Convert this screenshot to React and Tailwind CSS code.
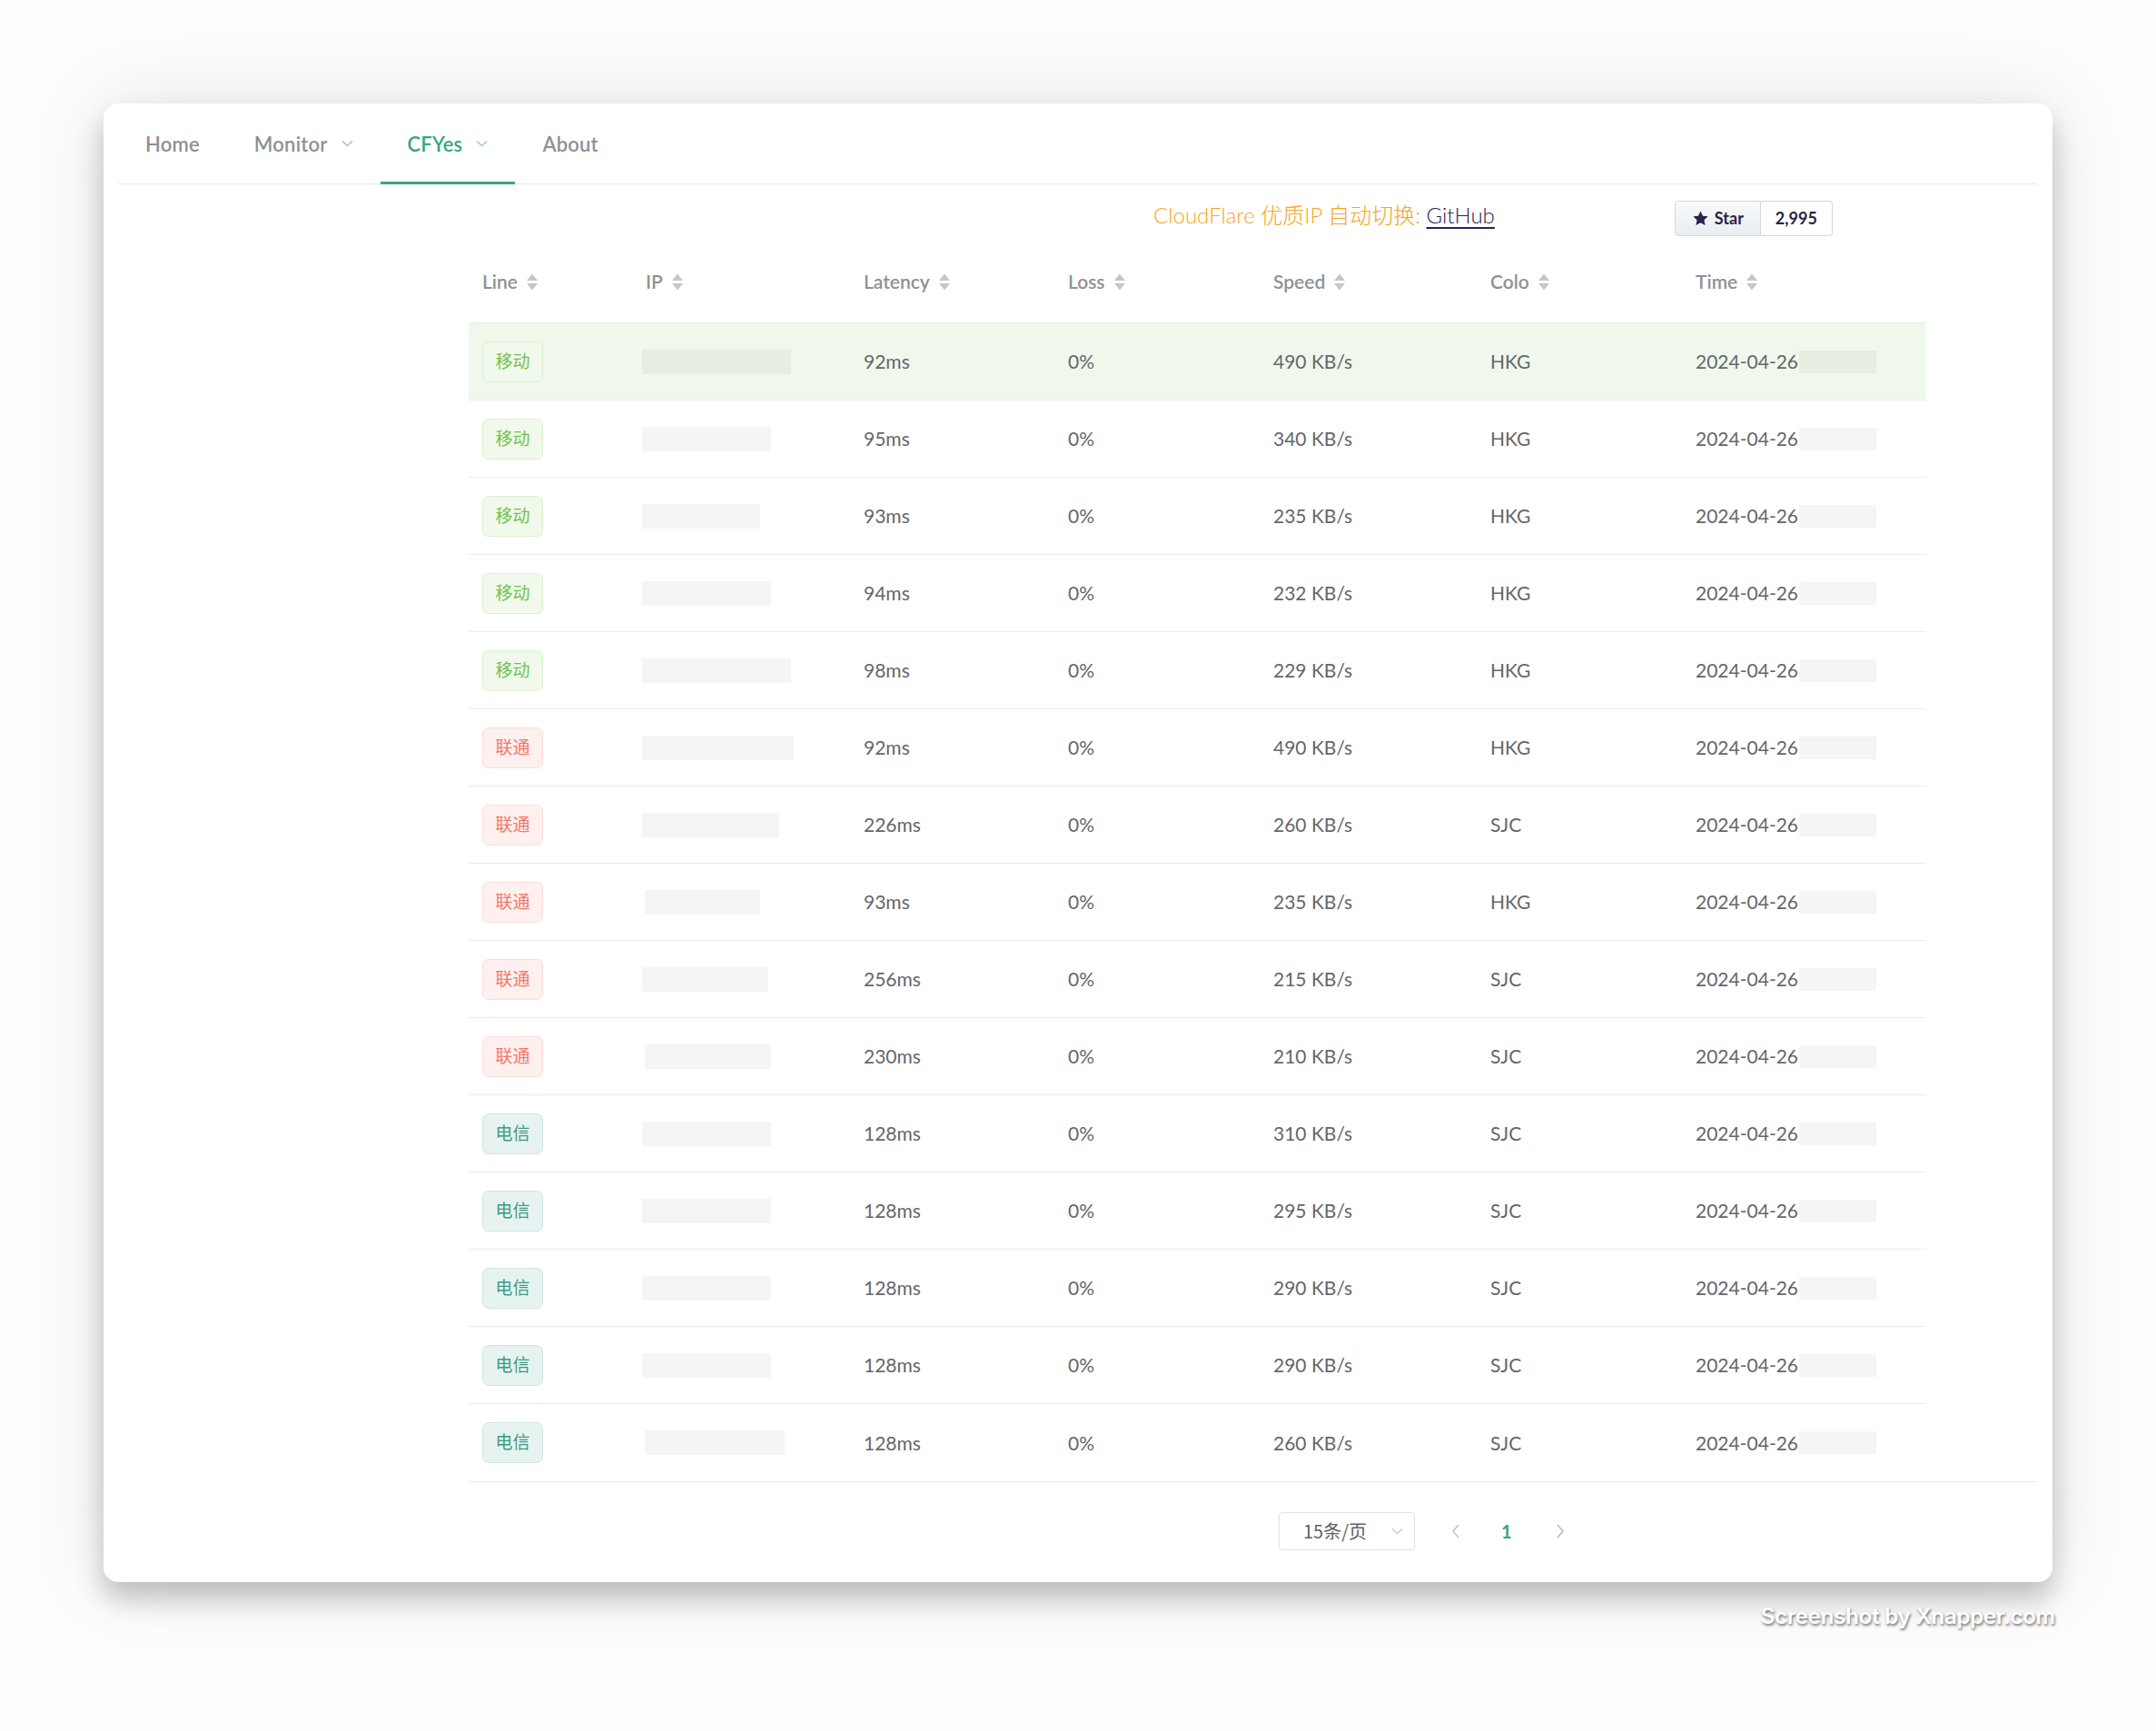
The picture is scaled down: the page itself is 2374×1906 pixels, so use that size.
const rows = [
  { line: "移动", ip: 164, latency: "92ms", speed: "490 KB/s", colo: "HKG" },
  { line: "移动", ip: 142, latency: "95ms", speed: "340 KB/s", colo: "HKG" },
  { line: "移动", ip: 130, latency: "93ms", speed: "235 KB/s", colo: "HKG" },
  { line: "移动", ip: 142, latency: "94ms", speed: "232 KB/s", colo: "HKG" },
  { line: "移动", ip: 164, latency: "98ms", speed: "229 KB/s", colo: "HKG" },
  { line: "联通", ip: 167, latency: "92ms", speed: "490 KB/s", colo: "HKG" },
  { line: "联通", ip: 151, latency: "226ms", speed: "260 KB/s", colo: "SJC" },
  { line: "联通", ip: 127, latency: "93ms", speed: "235 KB/s", colo: "HKG", shift: true },
  { line: "联通", ip: 139, latency: "256ms", speed: "215 KB/s", colo: "SJC" },
  { line: "联通", ip: 139, latency: "230ms", speed: "210 KB/s", colo: "SJC", shift: true },
  { line: "电信", ip: 142, latency: "128ms", speed: "310 KB/s", colo: "SJC" },
  { line: "电信", ip: 142, latency: "128ms", speed: "295 KB/s", colo: "SJC" },
  { line: "电信", ip: 142, latency: "128ms", speed: "290 KB/s", colo: "SJC" },
  { line: "电信", ip: 142, latency: "128ms", speed: "290 KB/s", colo: "SJC" },
  { line: "电信", ip: 154, latency: "128ms", speed: "260 KB/s", colo: "SJC", shift: true },
];

const tagStyles = {
  移动: "text-[#72c24f] bg-[#f0f9eb] border-[#dcf0d0]",
  联通: "text-[#f2776a] bg-[#fef0ee] border-[#fcdcd5]",
  电信: "text-[#3c9a84] bg-[#e7f3f1] border-[#cfe5e1]",
};

const columns = [
  { label: "Line", w: "w-[180px]" },
  { label: "IP", w: "w-[240px]" },
  { label: "Latency", w: "w-[225px]" },
  { label: "Loss", w: "w-[226px]" },
  { label: "Speed", w: "w-[239px]" },
  { label: "Colo", w: "w-[226px]" },
  { label: "Time", w: "w-[269px]" },
];

function Chevron({ className = "" }) {
  return (
    <svg width="13" height="8" viewBox="0 0 13 8" className={className} fill="none">
      <polyline points="1,1.5 6.5,6.5 12,1.5" stroke="currentColor" strokeWidth="1.2" />
    </svg>
  );
}

function SortIcon() {
  return (
    <svg width="14" height="21" viewBox="0 0 14 21" className="ml-[9px] text-[#c3c7cc]">
      <path d="M7 1.5 L13 9 L1 9 Z" fill="currentColor" />
      <path d="M7 19.5 L13 12 L1 12 Z" fill="currentColor" />
    </svg>
  );
}

function NavItem({ label, active, caret }) {
  return (
    <div
      className={`relative h-full px-[30px] flex items-center gap-[15px] tracking-[0.2px] ${
        active ? "text-[#37a681]" : "text-[#8d9196]"
      }`}
    >
      <span>{label}</span>
      {caret && <Chevron className={active ? "text-[#8fcab5]" : "text-[#a9adb1]"} />}
      {active && <span className="absolute left-0 right-0 bottom-[-1px] h-[3px] bg-[#3aa581]" />}
    </div>
  );
}

export default function App() {
  return (
    <div
      className="w-[2374px] min-h-[1906px] bg-[#fdfdfd] pt-[114px] pl-[114px]"
      style={{ fontFamily: "Lato, 'Noto Sans CJK SC', sans-serif" }}
    >
      <div className="w-[2146px] h-[1628px] bg-white rounded-[16px] shadow-[0_18px_30px_rgba(0,0,0,0.22),0_0_90px_rgba(0,0,0,0.10)] flex flex-col">
        {/* top nav */}
        <nav className="mx-[16px] h-[89px] border-b border-[#e6e7ea] flex items-stretch text-[22px] font-semibold">
          <NavItem label="Home" />
          <NavItem label="Monitor" caret />
          <NavItem label="CFYes" caret active />
          <NavItem label="About" />
        </nav>

        {/* title row */}
        <div className="mt-[18px] h-[39px] flex items-center pl-[1156px]">
          <div className="text-[24px] font-light text-[#f5a524] leading-none mb-[8px]">
            CloudFlare 优质IP 自动切换:{" "}
            <a className="text-[#2e2150] underline underline-offset-[4px] decoration-[2px]">GitHub</a>
          </div>
          <div className="ml-[198px] flex h-[39px] text-[18px] font-bold text-[#2d2249]">
            <div className="w-[95px] flex items-center justify-center gap-[6px] rounded-l-[4px] border border-[#d3d6da] bg-gradient-to-b from-[#f7f9fa] to-[#eaeef1]">
              <svg width="19" height="19" viewBox="0 0 24 24" fill="currentColor">
                <path d="M12 1.8l3.1 6.6 7.2.9-5.3 5 1.4 7.1L12 17.9l-6.4 3.5 1.4-7.1-5.3-5 7.2-.9z" />
              </svg>
              <span>Star</span>
            </div>
            <div className="w-[79px] flex items-center justify-center rounded-r-[4px] border border-l-0 border-[#d3d6da] bg-white">
              2,995
            </div>
          </div>
        </div>

        {/* table */}
        <div className="ml-[402px] w-[1726px] border-b border-[#ebebef]">
          <div className="w-[1605px]">
            <div className="h-[96px] flex border-b border-[#ebebef] text-[21px] font-semibold text-[#8e9196]">
              {columns.map((c) => (
                <div key={c.label} className={`${c.w} pl-[15px] pt-[5px] flex items-center`}>
                  <span>{c.label}</span>
                  <SortIcon />
                </div>
              ))}
            </div>
            {rows.map((r, i) => (
              <div
                key={i}
                className={`h-[85px] flex items-center text-[21px] text-[#64676b] ${
                  i < rows.length - 1 ? "border-b border-[#ebebef]" : ""
                } ${i === 0 ? "bg-[#f0f8ec]" : ""}`}
              >
                <div className="w-[180px] pl-[15px]">
                  <span
                    className={`inline-flex w-[67px] h-[45px] items-center justify-center rounded-[7px] border text-[19px] ${tagStyles[r.line]}`}
                  >
                    {r.line}
                  </span>
                </div>
                <div className={`w-[240px] ${r.shift ? "pl-[14px]" : "pl-[11px]"}`}>
                  <div className="h-[27px] bg-black/[0.04]" style={{ width: r.ip }} />
                </div>
                <div className="w-[225px] pl-[15px]">{r.latency}</div>
                <div className="w-[226px] pl-[15px]">0%</div>
                <div className="w-[239px] pl-[15px]">{r.speed}</div>
                <div className="w-[226px] pl-[15px]">{r.colo}</div>
                <div className="w-[269px] pl-[15px] flex items-center gap-[1px]">
                  <span>2024-04-26</span>
                  <span className="w-[85px] h-[25px] bg-black/[0.04]" />
                </div>
              </div>
            ))}
          </div>
        </div>

        {/* pagination */}
        <div className="mt-[33px] pl-[1294px] flex items-center h-[42px]">
          <div className="w-[150px] h-[42px] rounded-[4px] border border-[#e0e0e6] flex items-center pl-[26px] pr-[12px] text-[20px] text-[#5f6266]">
            <span className="flex-1" style={{ fontFamily: "'Noto Sans CJK SC', sans-serif" }}>
              15条/页
            </span>
            <Chevron className="text-[#c2c4c8]" />
          </div>
          <svg width="10" height="16" viewBox="0 0 10 16" className="ml-[40px] text-[#c2c4c8]" fill="none">
            <polyline points="8,1 2,8 8,15" stroke="currentColor" strokeWidth="1.5" />
          </svg>
          <span className="ml-[45px] text-[20px] font-bold text-[#37a681]">1</span>
          <svg width="10" height="16" viewBox="0 0 10 16" className="ml-[48px] text-[#b6b9bd]" fill="none">
            <polyline points="2,1 8,8 2,15" stroke="currentColor" strokeWidth="1.5" />
          </svg>
        </div>
      </div>

      {/* watermark */}
      <div className="mt-[23px] w-[2149px] flex justify-end">
        <span
          className="text-[24px] font-semibold text-white leading-[30px] tracking-[-0.2px]"
          style={{ fontFamily: "Inter, sans-serif", textShadow: "1px 2px 3px rgba(0,0,0,0.55)" }}
        >
          Screenshot by Xnapper.com
        </span>
      </div>
    </div>
  );
}
